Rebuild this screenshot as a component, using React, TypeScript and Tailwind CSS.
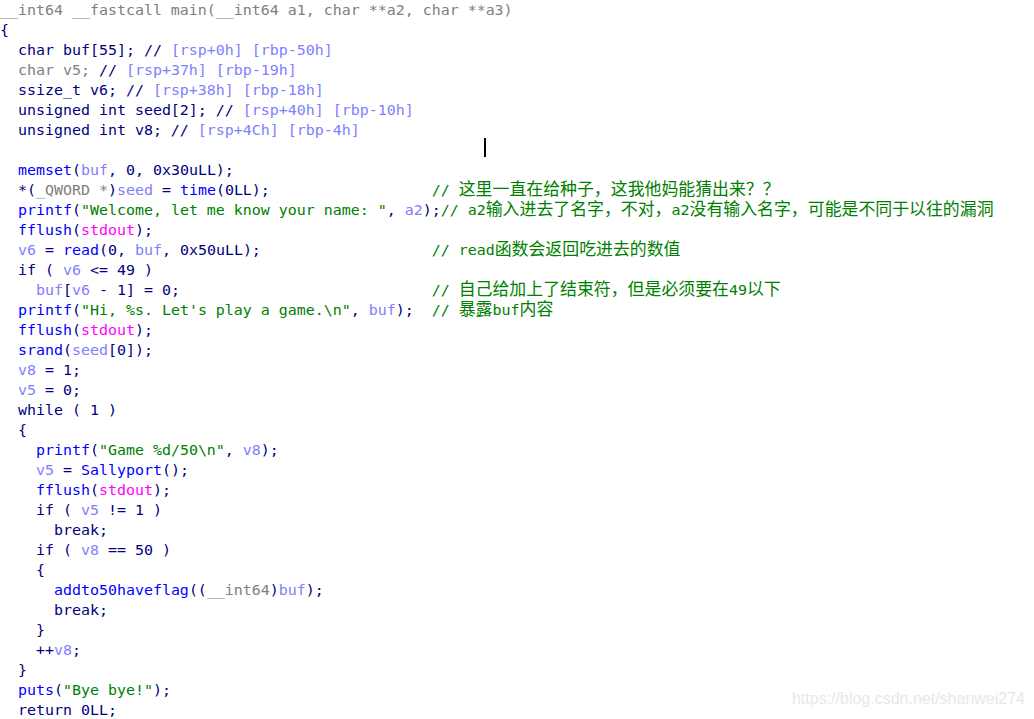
import React from "react";

type Tok = [string, string];

// ida pseudocode colours
const N = "text-[#000080]"; // keywords, punctuation
const F = "text-[#0000ff]"; // function names
const G = "text-[#808080]"; // prototype / casts / unused
const V = "text-[#8080ff]"; // local vars
const S = "text-[#008000]"; // strings
const M = "text-[#ff00ff]"; // imports
const C = "cmt"; // comment with CJK

const COL = 48;

const padTo = (toks: Tok[], col: number = COL): Tok[] => {
  const len = toks.reduce((a, t) => a + t[0].length, 0);
  return len < col ? [...toks, [" ".repeat(col - len), N]] : toks;
};

const lines: Tok[][] = [
  [["__int64 __fastcall main(__int64 a1, char **a2, char **a3)", G]],
  [["{", N]],
  [["  char buf[55]; // ", N], ["[rsp+0h] [rbp-50h]", V]],
  [["  char v5; ", G], ["// ", N], ["[rsp+37h] [rbp-19h]", V]],
  [["  ssize_t v6; // ", N], ["[rsp+38h] [rbp-18h]", V]],
  [["  unsigned int seed[2]; // ", N], ["[rsp+40h] [rbp-10h]", V]],
  [["  unsigned int v8; // ", N], ["[rsp+4Ch] [rbp-4h]", V]],
  [],
  [["  ", N], ["memset", F], ["(", N], ["buf", V], [", 0, 0x30uLL);", N]],
  [
    ...padTo([["  *(", N], ["_QWORD *", G], [")", N], ["seed", V], [" = ", N], ["time", F], ["(0LL);", N]]),
    ["// 这里一直在给种子，这我他妈能猜出来？？", C],
  ],
  [
    ["  ", N], ["printf", F], ["(", N], ["\"Welcome, let me know your name: \"", S], [", ", N], ["a2", V], [");", N],
    ["// a2输入进去了名字，不对，a2没有输入名字，可能是不同于以往的漏洞", C],
  ],
  [["  ", N], ["fflush", F], ["(", N], ["stdout", M], [");", N]],
  [
    ...padTo([["  ", N], ["v6", V], [" = ", N], ["read", F], ["(0, ", N], ["buf", V], [", 0x50uLL);", N]]),
    ["// read函数会返回吃进去的数值", C],
  ],
  [["  if ( ", N], ["v6", V], [" <= 49 )", N]],
  [
    ...padTo([["    ", N], ["buf", V], ["[", N], ["v6", V], [" - 1] = 0;", N]]),
    ["// 自己给加上了结束符，但是必须要在49以下", C],
  ],
  [
    ...padTo([["  ", N], ["printf", F], ["(", N], ["\"Hi, %s. Let's play a game.\\n\"", S], [", ", N], ["buf", V], [");", N]]),
    ["// 暴露buf内容", C],
  ],
  [["  ", N], ["fflush", F], ["(", N], ["stdout", M], [");", N]],
  [["  ", N], ["srand", F], ["(", N], ["seed", V], ["[0]);", N]],
  [["  ", N], ["v8", V], [" = 1;", N]],
  [["  ", N], ["v5", V], [" = 0;", N]],
  [["  while ( 1 )", N]],
  [["  {", N]],
  [["    ", N], ["printf", F], ["(", N], ["\"Game %d/50\\n\"", S], [", ", N], ["v8", V], [");", N]],
  [["    ", N], ["v5", V], [" = ", N], ["Sallyport", F], ["();", N]],
  [["    ", N], ["fflush", F], ["(", N], ["stdout", M], [");", N]],
  [["    if ( ", N], ["v5", V], [" != 1 )", N]],
  [["      break;", N]],
  [["    if ( ", N], ["v8", V], [" == 50 )", N]],
  [["    {", N]],
  [["      ", N], ["addto50haveflag", F], ["((", N], ["__int64", G], [")", N], ["buf", V], [");", N]],
  [["      break;", N]],
  [["    }", N]],
  [["    ++", N], ["v8", V], [";", N]],
  [["  }", N]],
  [["  ", N], ["puts", F], ["(", N], ["\"Bye bye!\"", S], [");", N]],
  [["  return 0LL;", N]],
];

const CJK = /[\u3000-\u9fff\uff00-\uffef]/;

const Comment = ({ text }: { text: string }) => {
  const parts = text.split(/([\u3000-\u9fff\uff00-\uffef]+)/);
  return (
    <span className="text-[#008000]">
      {parts.map((p, i) =>
        CJK.test(p) ? (
          <span
            key={i}
            className="text-[16.9px] leading-[0] font-['Noto_Sans_CJK_SC',sans-serif]"
          >
            {p}
          </span>
        ) : (
          <span key={i}>{p}</span>
        )
      )}
    </span>
  );
};

export default function App() {
  return (
    <div className="relative w-[1034px] h-[719px] overflow-hidden bg-white font-['DejaVu_Sans_Mono',monospace] text-[14.95px]">
      {lines.map((line, i) => (
        <div key={i} className="relative h-[20px] leading-[20px] whitespace-pre">
          {line.map(([t, c], j) =>
            c === C ? (
              <Comment key={j} text={t} />
            ) : (
              <span key={j} className={c}>
                {t}
              </span>
            )
          )}
          {i === 7 && (
            <span className="absolute left-[484px] top-[-2px] w-[2px] h-[19px] bg-black" />
          )}
        </div>
      ))}
      <div className="absolute right-[9px] top-[689px] font-['Liberation_Sans',sans-serif] text-[16px] leading-[20px] text-[#e8e8e8]">
        https://blog.csdn.net/shanwei274
      </div>
    </div>
  );
}
